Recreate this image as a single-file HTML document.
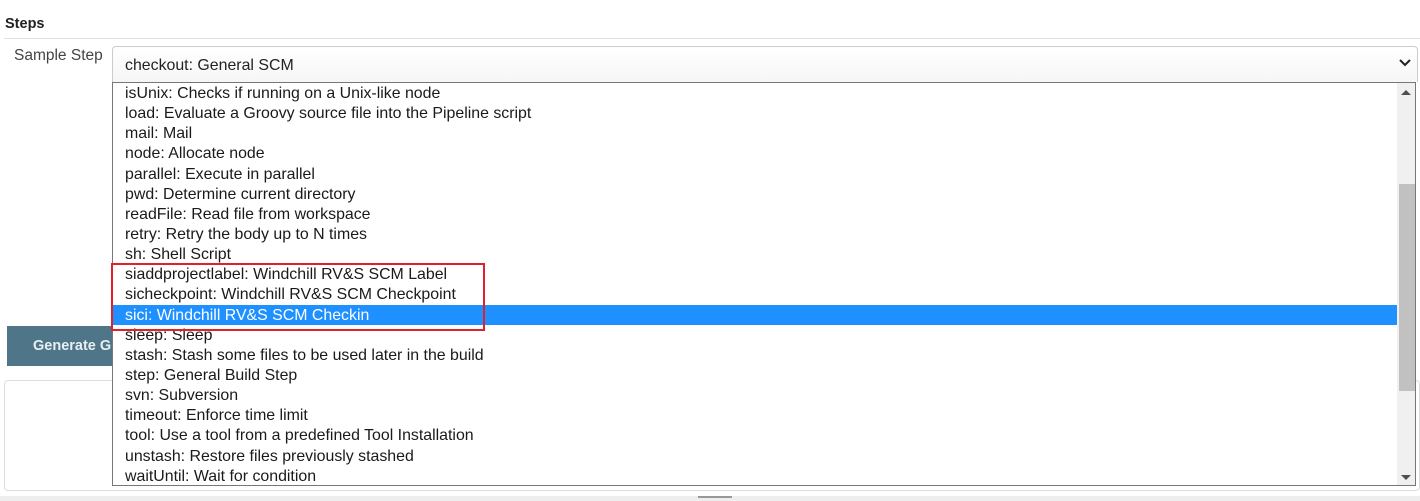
<!DOCTYPE html>
<html><head><style>
body{margin:0;width:1420px;height:501px;overflow:hidden;background:#fff;font-family:"Liberation Sans",Arial,sans-serif;position:relative}
.a{position:absolute}
.row{height:20.15px;line-height:21px;padding-left:12px;font-size:15.9px;color:#1a1a1a;white-space:nowrap}
.sel{background:#1e90ff;color:#fff}
</style></head><body>
<div class="a" style="left:5px;top:16px;font-weight:bold;font-size:14.5px;color:#222">Steps</div>
<div class="a" style="left:4px;top:38px;width:1416px;height:1px;background:#e2e2e2"></div>
<div class="a" style="left:14px;top:47px;font-size:15.5px;color:#444">Sample Step</div>
<div class="a" style="left:112px;top:46px;width:1304px;height:35px;border:1px solid #ccc;border-bottom:none;border-radius:4px 4px 0 0;background:linear-gradient(#fff,#f6f6f6)"></div>
<div class="a" style="left:125px;top:57px;font-size:15.9px;color:#222">checkout: General SCM</div>
<svg class="a" style="left:1398px;top:58px" width="14" height="10"><path d="M2 2 L7 7 L12 2" stroke="#222" stroke-width="2" fill="none"/></svg>
<div class="a" style="left:7px;top:326px;width:105px;height:40px;background:#4f7589;color:#e8eef2;font-weight:bold;font-size:14.5px;line-height:40px;padding-left:26px;box-sizing:border-box;overflow:hidden">Generate G</div>
<div class="a" style="left:4px;top:380px;width:1416px;height:111px;border:1px solid #ddd;border-radius:4px;box-sizing:border-box"></div>
<div class="a" style="left:0;top:496px;width:1420px;height:5px;background:#eee"></div>
<div class="a" style="left:112px;top:82px;width:1304px;height:404px;border:1px solid #777;background:#fff;box-sizing:border-box;overflow:hidden">
<div style="padding-top:0px;width:1284px">
<div class="row">isUnix: Checks if running on a Unix-like node</div>
<div class="row">load: Evaluate a Groovy source file into the Pipeline script</div>
<div class="row">mail: Mail</div>
<div class="row">node: Allocate node</div>
<div class="row">parallel: Execute in parallel</div>
<div class="row">pwd: Determine current directory</div>
<div class="row">readFile: Read file from workspace</div>
<div class="row">retry: Retry the body up to N times</div>
<div class="row">sh: Shell Script</div>
<div class="row">siaddprojectlabel: Windchill RV&amp;S SCM Label</div>
<div class="row">sicheckpoint: Windchill RV&amp;S SCM Checkpoint</div>
<div class="row sel">sici: Windchill RV&amp;S SCM Checkin</div>
<div class="row">sleep: Sleep</div>
<div class="row">stash: Stash some files to be used later in the build</div>
<div class="row">step: General Build Step</div>
<div class="row">svn: Subversion</div>
<div class="row">timeout: Enforce time limit</div>
<div class="row">tool: Use a tool from a predefined Tool Installation</div>
<div class="row">unstash: Restore files previously stashed</div>
<div class="row">waitUntil: Wait for condition</div>
</div>
<div class="a" style="left:1284px;top:0;width:18px;height:402px;background:#f0f0f0"></div>
<div class="a" style="left:1286px;top:101px;width:16px;height:207px;background:#c1c1c1"></div>
<svg class="a" style="left:1287px;top:6px" width="12" height="8"><path d="M1 6 L6 1 L11 6Z" fill="#505050"/></svg>
<svg class="a" style="left:1287px;top:391px" width="12" height="8"><path d="M1 1 L6 6 L11 1Z" fill="#505050"/></svg>
</div>
<div class="a" style="left:111px;top:263px;width:374px;height:68px;border:2px solid #e0202a;box-sizing:border-box"></div>
<div class="a" style="left:698px;top:496px;width:34px;height:2px;background:#999"></div>
</body></html>
